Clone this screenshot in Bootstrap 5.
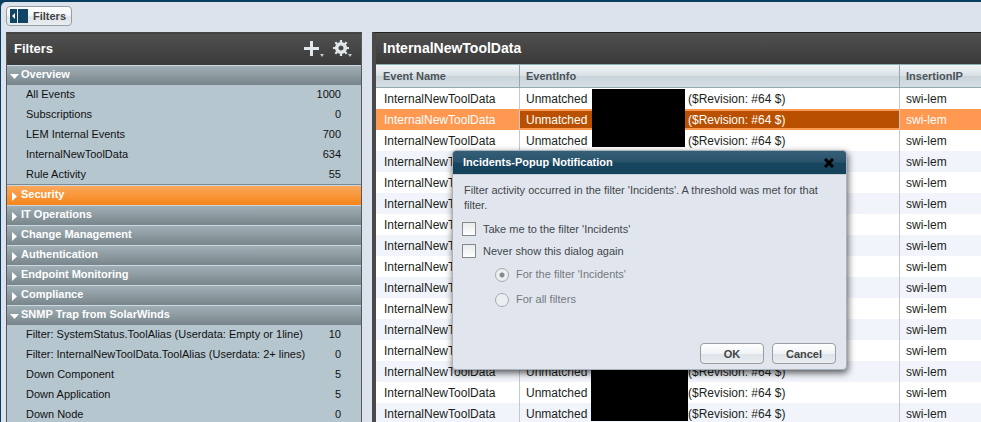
<!DOCTYPE html>
<html lang="en">
<head>
<meta charset="utf-8">
<meta name="viewport" content="width=device-width, initial-scale=1">
<title>Filters</title>
<link href="https://cdn.jsdelivr.net/npm/bootstrap@5.3.0/dist/css/bootstrap.min.css" rel="stylesheet">
<style>
body{font:12px/20px "Liberation Sans",Arial,sans-serif;color:#1c1f21;background:#083f60}
.shell{background:#dce3ec;margin:2px 0 0 1px;height:calc(100vh - 2px);border-top-left-radius:5px;padding:4px 0 0 5px}
.glossy{border:1px solid #9a9ea2;border-radius:4px;color:#444;background:linear-gradient(#fff,#f0f3f5 50%,#dde3e8 55%,#e9edf0);font-size:11px;font-weight:700;line-height:18px;padding:0}
.toggle{height:20px;width:66px;padding-left:3px;gap:5px}
.side{width:356px;margin-top:6px;border:1px solid #55595b;border-top:2px solid #444;background:#b6c6cf}
.bar{background:linear-gradient(#505050,#3a3a3a);color:#fff;font-size:14px;font-weight:700;height:31px;padding:0 7px 2px}
.side .bar{font-size:13px}
.tool{background:none;border:0;padding:0;line-height:0}
.group{height:20px;line-height:17px;width:100%;padding:0 0 2px 2px;border:0;border-top:1px solid #ccd8df;background:linear-gradient(#a0aeb5,#78868c);color:#fff;font-size:11px;font-weight:700}
.group svg{margin:2px 2px 0 0}
.group.active{background:linear-gradient(#fba85b,#f6851a)}
.entry{height:20px;line-height:19px;font-size:11px;color:#111;padding:0 20px 0 19px}
.entry:last-child{height:19px}
.open-list{border-bottom:1px solid #7c8b92}
.main{margin:6px 0 0 10px;border-top:1px solid #222;border-left:4px solid #4a4a4a;background:#fff}
.events{width:100%;table-layout:fixed;border-collapse:separate;border-spacing:0}
.events th{height:24px;padding:0 0 1px 7px;font-size:11px;line-height:20px;color:#4a5358;background:linear-gradient(#f1f4f6,#d8e0e5 50%,#c9d4da 52%,#d5dee3);border-top:1px solid #8fb0b3;border-bottom:1px solid #8fabad;border-right:1px solid #8fabad}
.events td{height:21px;line-height:19px;padding:2px 0 0 8px;border-right:1px solid #c5c8ca;white-space:nowrap;overflow:hidden}
.events td+td,.events th+th{padding-left:6px}
.events tr>:last-child{border-right:0}
.events tbody tr:nth-child(even){background:#f1f5fb}
.events tbody tr.picked{background:#ff9851;color:#fff}
.picked .hit{background:linear-gradient(#ff9851 2px,#b95000 2px,#b95000 19px,#ff9851 19px)}
.c1{width:144px}.c2{width:380px}
.what{display:inline-block;width:162px}
.cover{position:absolute;background:#000}
.cover.upper{left:216px;top:56px;width:93px;height:58px}
.cover.lower{left:215px;top:330px;width:97px;height:58px}
.popup{position:absolute;left:452px;top:150px;width:395px;background:#e1e6ee;border:1px solid #a9b3bb;border-radius:4px;box-shadow:1px 3px 7px rgba(0,0,0,.65);color:#42474b;font-size:11px;line-height:15px}
.popup-head{height:24px;background:linear-gradient(#345f77,#28536b 48%,#174560 52%,#15415a);color:#fff;font-weight:700;border-radius:3px 3px 0 0;border-bottom:1px solid #c3ced7;padding:0 12px 0 10px}
.popup-body{padding:8px 10px 5px 9px}
.popup-body p{padding:0 2px;margin-bottom:5px}
.tick{appearance:none;margin:0;width:14px;height:14px;flex:none;border:1px solid #85898c;background:linear-gradient(#e9ebec,#fff)}
.tick:checked{background:#4a5358}
.pick{appearance:none;margin:0;width:14px;height:14px;flex:none;border:1px solid #a5aaae;border-radius:50%;background:#eceff2}
.pick:checked{background:radial-gradient(circle,#85898c 2px,#eceff2 3px)}
.line{height:22px;gap:7px}
.sub{height:25px;gap:7px;padding-left:33px;color:#74797d}
.popup .glossy{width:64px;height:21px}
.actions{margin-top:31px}
</style>
<script src="https://cdn.jsdelivr.net/npm/bootstrap@5.3.0/dist/js/bootstrap.bundle.min.js"></script>
</head>
<body class="overflow-hidden">
<div class="shell overflow-hidden">
  <button class="glossy toggle d-flex align-items-center" type="button">
    <svg class="flex-shrink-0" width="18" height="14" viewBox="0 0 18 14"><path fill="#104565" d="M0 0h7v14H0zM8 0h10v14H8z"/><path fill="#fff" d="M5 4v6L2 7z"/></svg><span>Filters</span>
  </button>
  <div class="d-flex align-items-start">
    <aside class="side flex-shrink-0">
      <div class="bar d-flex align-items-center">
        <span class="me-auto">Filters</span>
        <button class="tool" type="button" aria-label="Add"><svg width="24" height="20" viewBox="0 0 24 20"><path fill="#e2e8ec" d="M8 2h3v6h6v3h-6v6H8v-6H2V8h6z"/><path fill="#bccbd3" d="M18 15h4l-2 3z"/></svg></button>
        <button class="tool ms-1" type="button" aria-label="Settings"><svg width="24" height="20" viewBox="0 0 24 20"><g transform="translate(11 9)"><circle r="4.300" fill="none" stroke="#dfe6ea" stroke-width="3.600"/><path stroke="#dfe6ea" stroke-width="2.200" d="M0-8v3M0 8V5M-8 0h3M8 0H5M-5.700-5.700l2 2M5.700 5.700l-2-2M-5.700 5.700l2-2M5.700-5.700l-2 2"/></g><path fill="#bccbd3" d="M18 15h4l-2 3z"/></svg></button>
      </div>
      <div id="groups"></div>
    </aside>
    <main class="main flex-grow-1 position-relative">
      <div class="bar d-flex align-items-center">InternalNewToolData</div>
      <table class="events">
        <colgroup><col class="c1"><col class="c2"><col></colgroup>
        <thead><tr><th>Event Name</th><th>EventInfo</th><th>InsertionIP</th></tr></thead>
        <tbody id="rows"></tbody>
      </table>
      <div class="cover upper"></div>
      <div class="cover lower"></div>
    </main>
  </div>
</div>
<section class="popup" role="dialog" aria-labelledby="popup-title">
  <div class="popup-head d-flex align-items-center justify-content-between">
    <span id="popup-title">Incidents-Popup Notification</span>
    <button class="tool" type="button" aria-label="Close"><svg width="10" height="10" viewBox="0 0 10 10"><path stroke="#000" stroke-width="3" d="M1 1l8 8M9 1L1 9"/></svg></button>
  </div>
  <div class="popup-body">
    <p>Filter activity occurred in the filter 'Incidents'. A threshold was met for that filter.</p>
    <div class="line d-flex align-items-center"><input class="tick" type="checkbox" id="go"><label for="go">Take me to the filter 'Incidents'</label></div>
    <div class="line d-flex align-items-center"><input class="tick" type="checkbox" id="never"><label for="never">Never show this dialog again</label></div>
    <div class="sub d-flex align-items-center"><input class="pick" type="radio" name="scope" id="one" checked disabled><label for="one">For the filter 'Incidents'</label></div>
    <div class="sub d-flex align-items-center"><input class="pick" type="radio" name="scope" id="all" disabled><label for="all">For all filters</label></div>
    <div class="actions d-flex justify-content-end gap-2"><button class="glossy" type="button">OK</button><button class="glossy" type="button">Cancel</button></div>
  </div>
</section>
<script>
const groups=[
 ["Overview",[["All Events",1000],["Subscriptions",0],["LEM Internal Events",700],["InternalNewToolData",634],["Rule Activity",55]]],
 ["Security"],["IT Operations"],["Change Management"],["Authentication"],["Endpoint Monitoring"],["Compliance"],
 ["SNMP Trap from SolarWinds",[["Filter: SystemStatus.ToolAlias (Userdata: Empty or 1line)",10],["Filter: InternalNewToolData.ToolAlias (Userdata: 2+ lines)",0],["Down Component",5],["Down Application",5],["Down Node",0]]]];
document.getElementById("groups").innerHTML=groups.map(([name,list])=>
 `<button type="button" class="group d-flex align-items-center${name==="Security"?" active":""}"><svg width="10" height="10" viewBox="0 0 10 10"><path fill="#fff" d="${list?"M1 3h9L5.500 8z":"M3 1v9l5-4.500z"}"/></svg>${name}</button>`+
 (list?`<div class="open-list">${list.map(([t,n])=>`<div class="entry d-flex justify-content-between"><span>${t}</span><span>${n}</span></div>`).join("")}</div>`:"")).join("");
document.getElementById("rows").innerHTML=Array.from({length:16},(_,i)=>
 `<tr${i===1?' class="picked"':""}><td>InternalNewToolData</td><td class="hit"><span class="what">Unmatched</span>($Revision: #64 $)</td><td>swi-lem</td></tr>`).join("");
</script>
</body>
</html>
